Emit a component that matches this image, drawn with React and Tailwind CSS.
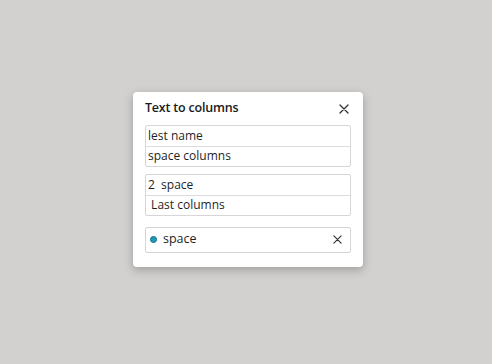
import React from 'react';

const Row = ({ children, first }) => (
  <div className={`h-[20px] flex items-center px-[2px] text-[12px] text-[#1f1f1f] ${first ? '' : 'border-t border-[#dcdcdc]'}`}>
    {children}
  </div>
);

const App = () => {
  return (
    <div className="w-[492px] h-[364px] bg-[#d2d1cf] flex items-center justify-center" style={{ fontFamily: '"Open Sans", "Liberation Sans", sans-serif' }}>
      <div className="w-[230px] h-[175px] bg-white rounded-[4px] shadow-[0_3px_10px_rgba(0,0,0,0.25)] px-[12px] pt-[8px] -mt-[6px] ml-[4px]">
        <div className="flex items-center justify-between h-[18px] mb-[7px]">
          <span className="text-[12.5px] font-semibold text-[#1a1a1a] tracking-[-0.2px]">Text to columns</span>
          <svg width="10" height="10" viewBox="0 0 10 10" className="mr-[2px]">
            <path d="M1 1L9 9M9 1L1 9" stroke="#333" strokeWidth="1.3" strokeLinecap="round" />
          </svg>
        </div>
        <div className="border border-[#d6d6d6] rounded-[2px]">
          <Row first>lest name</Row>
          <Row>space columns</Row>
        </div>
        <div className="border border-[#d6d6d6] rounded-[2px] mt-[7px]">
          <Row first>2&nbsp;&nbsp;space</Row>
          <Row>&nbsp;Last columns</Row>
        </div>
        <div className="border border-[#d6d6d6] rounded-[2px] mt-[11px] h-[26px] flex items-center pl-[4px] pr-[8px]">
          <span className="w-[7px] h-[7px] rounded-full bg-[#1e9ab8] border border-[#0d6f88]" />
          <span className="ml-[6px] text-[12.5px] text-[#1f1f1f]">space</span>
          <svg width="9" height="9" viewBox="0 0 10 10" className="ml-auto">
            <path d="M1 1L9 9M9 1L1 9" stroke="#333" strokeWidth="1.3" strokeLinecap="round" />
          </svg>
        </div>
      </div>
    </div>
  );
};

export default App;
